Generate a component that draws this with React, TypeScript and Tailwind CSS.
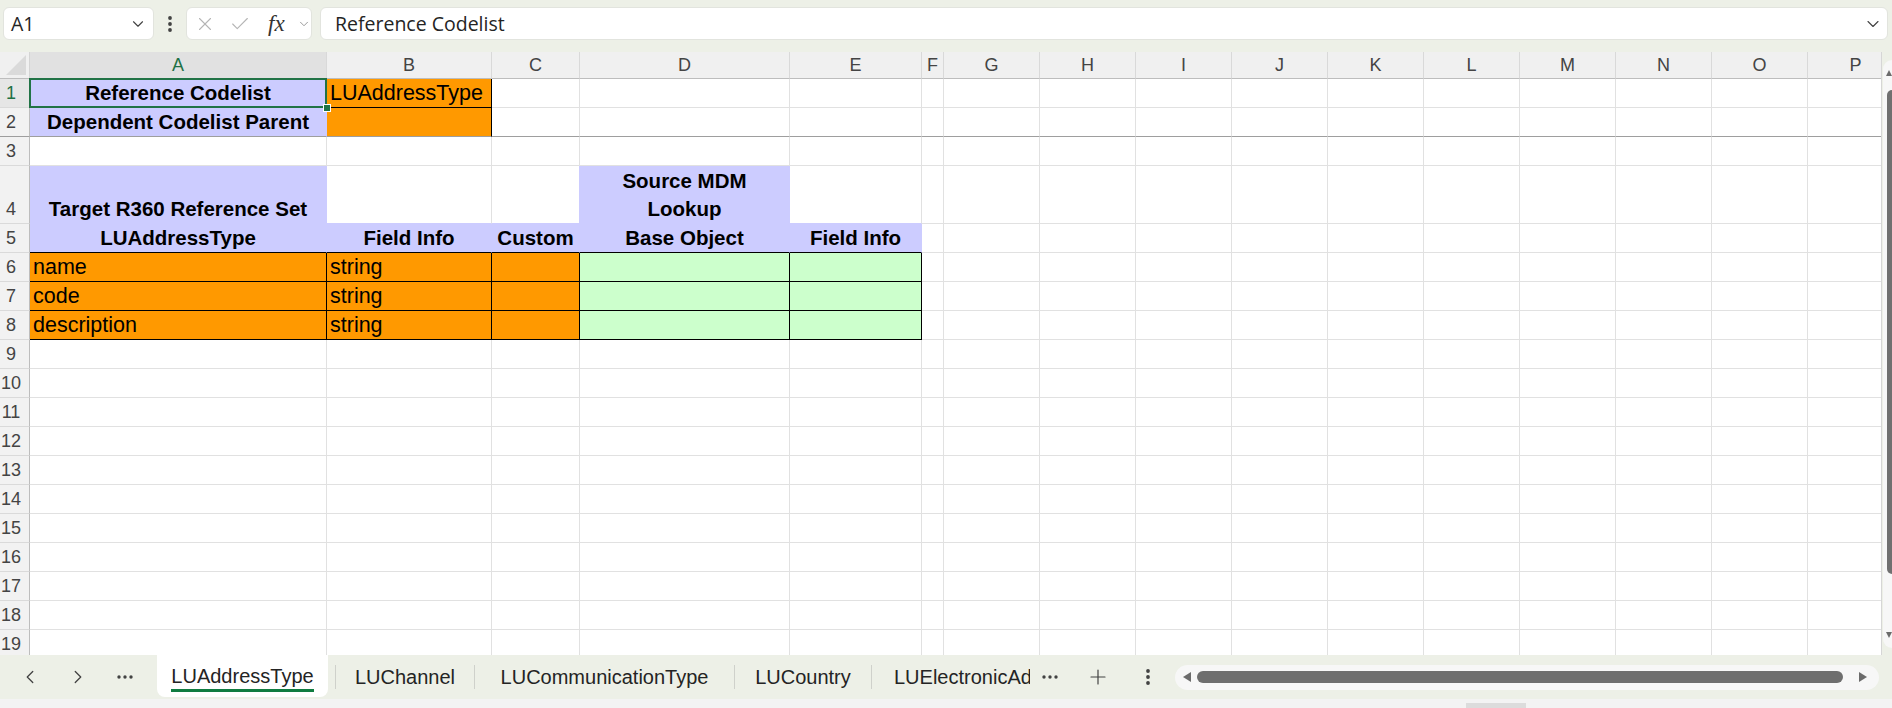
import clsx from "clsx";
import { Check, ChevronDown, ChevronLeft, ChevronRight, Plus, X } from "lucide-react";

type Fill = "none" | "lav" | "org" | "grn";
type Edge = "grid" | "black" | "lav" | "freeze";

type CellSpec = {
	fill?: Fill;
	right?: Edge;
	bottom?: Edge;
	text?: string;
	bold?: boolean;
	align?: "left" | "center";
	wrap?: boolean;
	bottomText?: boolean;
	selected?: boolean;
};

type RowSpec = { n: number; tall?: boolean; cells: CellSpec[] };

const LETTERS = ["A", "B", "C", "D", "E", "F", "G", "H", "I", "J", "K", "L", "M", "N", "O", "P"];

const GRID_COLS = "grid grid-cols-[30px_297px_165px_88px_210px_132px_22px_repeat(10,96px)]";

const FILL: Record<Fill, string> = {
	none: "bg-white",
	lav: "bg-[#ccccff]",
	org: "bg-[#ff9900]",
	grn: "bg-[#ccffcc]",
};

const RIGHT: Record<Edge, string> = {
	grid: "border-r-[#e1e1e1]",
	black: "border-r-black",
	lav: "border-r-[#ccccff]",
	freeze: "border-r-[#e1e1e1]",
};

const BOTTOM: Record<Edge, string> = {
	grid: "border-b-[#e1e1e1]",
	black: "border-b-black",
	lav: "border-b-[#ccccff]",
	freeze: "border-b-[#9e9e9e]",
};

// pad a row out to 16 columns with plain gridline cells
function fillRow(cells: CellSpec[], bottom: Edge = "grid"): CellSpec[] {
	const out = [...cells];
	while (out.length < LETTERS.length) out.push({ bottom });
	return out;
}

const lavHead = (text: string): CellSpec => ({
	fill: "lav",
	right: "lav",
	bottom: "black",
	text,
	bold: true,
	align: "center",
});

const dataRow = (name: string): CellSpec[] =>
	fillRow([
		{ fill: "org", right: "black", bottom: "black", text: name },
		{ fill: "org", right: "black", bottom: "black", text: "string" },
		{ fill: "org", right: "black", bottom: "black" },
		{ fill: "grn", right: "black", bottom: "black" },
		{ fill: "grn", right: "black", bottom: "black" },
	]);

const ROWS: RowSpec[] = [
	{
		n: 1,
		cells: fillRow([
			{ fill: "lav", right: "lav", bottom: "lav", text: "Reference Codelist", bold: true, align: "center", selected: true },
			{ fill: "org", right: "black", bottom: "black", text: "LUAddressType" },
		]),
	},
	{
		n: 2,
		cells: fillRow(
			[
				{ fill: "lav", right: "lav", bottom: "freeze", text: "Dependent Codelist Parent", bold: true, align: "center" },
				{ fill: "org", right: "black", bottom: "freeze" },
			],
			"freeze",
		),
	},
	{ n: 3, cells: fillRow([]) },
	{
		n: 4,
		tall: true,
		cells: fillRow([
			{ fill: "lav", right: "lav", bottom: "lav", text: "Target R360 Reference Set", bold: true, align: "center", bottomText: true },
			{ bottom: "lav" },
			{ right: "lav", bottom: "lav" },
			{ fill: "lav", right: "lav", bottom: "lav", text: "Source MDM Lookup", bold: true, align: "center", wrap: true },
			{ bottom: "lav" },
		]),
	},
	{
		n: 5,
		cells: fillRow([
			lavHead("LUAddressType"),
			lavHead("Field Info"),
			lavHead("Custom"),
			lavHead("Base Object"),
			lavHead("Field Info"),
		]),
	},
	{ n: 6, cells: dataRow("name") },
	{ n: 7, cells: dataRow("code") },
	{ n: 8, cells: dataRow("description") },
	...Array.from({ length: 11 }, (_, i) => ({ n: 9 + i, cells: fillRow([]) })),
];

function Dots({ vertical = false }: { vertical?: boolean }) {
	return vertical ? (
		<svg width="6" height="18" viewBox="0 0 6 18" className="fill-[#424242]">
			<circle cx="3" cy="3" r="1.9" />
			<circle cx="3" cy="9" r="1.9" />
			<circle cx="3" cy="15" r="1.9" />
		</svg>
	) : (
		<svg width="18" height="6" viewBox="0 0 18 6" className="fill-[#424242]">
			<circle cx="3" cy="3" r="1.7" />
			<circle cx="9" cy="3" r="1.7" />
			<circle cx="15" cy="3" r="1.7" />
		</svg>
	);
}

function FormulaBar() {
	return (
		<div className="flex h-[52px] shrink-0 items-start pl-[3px] pt-[7px]">
			<div className="flex h-[33px] w-[151px] items-center justify-between rounded-[6px] border border-[#e2e4de] bg-white pl-[7px] pr-[6px]">
				<span className="font-['Open_Sans',sans-serif] text-[19.5px] text-[#242424]">A1</span>
				<ChevronDown size={18} strokeWidth={1.5} className="text-[#424242]" />
			</div>
			<div className="flex h-[33px] w-[32px] items-center justify-center">
				<Dots vertical />
			</div>
			<div className="flex h-[33px] w-[126px] items-center rounded-[6px] border border-[#e2e4de] bg-white pl-[7px]">
				<X size={22} strokeWidth={1.2} className="text-[#b5b5b5]" />
				<Check size={22} strokeWidth={1.2} className="ml-[13px] text-[#b5b5b5]" />
				<span className="ml-[17px] font-['Liberation_Serif',serif] text-[23px] italic leading-none text-[#333]">fx</span>
				<ChevronDown size={14} strokeWidth={1.5} className="ml-[12px] text-[#8c8c8c]" />
			</div>
			<div className="ml-[8px] mr-[4px] flex h-[33px] flex-1 items-center justify-between rounded-[6px] border border-[#e2e4de] bg-white pl-[14px] pr-[4px]">
				<span className="font-['Open_Sans',sans-serif] text-[19.5px] text-[#242424]">Reference Codelist</span>
				<ChevronDown size={20} strokeWidth={1.3} className="text-[#424242]" />
			</div>
		</div>
	);
}

function ColumnHeaders() {
	return (
		<div className={clsx(GRID_COLS, "h-[27px]")}>
			<div className="relative border-r border-b border-r-[#d4d4d4] border-b-[#bdbdbd] bg-[#f0f0f0]">
				<svg width="20" height="20" viewBox="0 0 20 20" className="absolute right-[3px] bottom-[3px] fill-[#dadada]">
					<polygon points="20,0 20,20 0,20" />
				</svg>
			</div>
			{LETTERS.map((l) => (
				<div
					key={l}
					className={clsx(
						"border-r border-b border-r-[#d9d9d9] border-b-[#bdbdbd] text-center text-[18px] leading-[26px]",
						l === "A" ? "bg-[#e1e1e1] text-[#1e7145]" : "bg-[#f0f0f0] text-[#444]",
					)}
				>
					{l}
				</div>
			))}
		</div>
	);
}

function Cell({ c }: { c: CellSpec }) {
	return (
		<div
			className={clsx(
				"relative border-r border-b px-[3px] text-black",
				FILL[c.fill ?? "none"],
				RIGHT[c.right ?? "grid"],
				BOTTOM[c.bottom ?? "grid"],
				c.bold ? "text-[20.5px] font-bold" : "text-[21.5px]",
				c.align === "center" ? "text-center" : "text-left",
				c.wrap ? "flex items-center justify-center leading-[28px] whitespace-normal" : "whitespace-nowrap",
				c.bottomText ? "flex flex-col justify-end leading-[28px]" : !c.wrap && "leading-[28px]",
				c.selected && "z-10",
			)}
		>
			{c.wrap ? <span className="block w-[150px]">{c.text}</span> : c.text}
			{c.selected && (
				<>
					<div className="pointer-events-none absolute -top-px -left-px -right-px -bottom-px border-2 border-[#217346]" />
					<div className="absolute -right-[5px] -bottom-[5px] h-[8px] w-[8px] border border-white bg-[#217346]" />
				</>
			)}
		</div>
	);
}

function Sheet() {
	return (
		<div className="w-[1882px] shrink-0 overflow-hidden border-r border-[#d6d6d6] bg-white font-['Liberation_Sans',Arial,sans-serif]">
			<ColumnHeaders />
			{ROWS.map((row) => (
				<div key={row.n} className={clsx(GRID_COLS, row.tall ? "h-[58px]" : "h-[29px]")}>
					<div
						className={clsx(
							"flex items-end justify-center border-r border-b border-r-[#bdbdbd] pr-[7px] text-[18px] leading-[28px]",
							row.n === 2 ? "border-b-[#9e9e9e]" : "border-b-[#dadada]",
							row.n === 1 ? "bg-[#e6e6e6] text-[#1e7145]" : "bg-[#f2f2f2] text-[#444]",
						)}
					>
						{row.n}
					</div>
					{row.cells.map((c, i) => (
						<Cell key={`${row.n}-${LETTERS[i]}`} c={c} />
					))}
				</div>
			))}
		</div>
	);
}

function VScroll() {
	return (
		<div className="flex w-[10px] flex-col items-end pt-[8px]">
			<div className="flex h-[588px] w-[9px] flex-col items-end rounded-l-full bg-[#f7f7f7]">
				<svg width="6" height="6" viewBox="0 0 6 6" className="mt-[10px] fill-[#6b6b6b]">
					<polygon points="3,0 6,6 0,6" />
				</svg>
				<div className="mt-[14px] h-[484px] w-[5px] rounded-l-full bg-[#707070]" />
				<div className="flex-1" />
				<svg width="6" height="6" viewBox="0 0 6 6" className="mb-[10px] fill-[#6b6b6b]">
					<polygon points="0,0 6,0 3,6" />
				</svg>
			</div>
		</div>
	);
}

const TABS = [
	{ name: "LUChannel", w: "w-[138px]" },
	{ name: "LUCommunicationType", w: "w-[259px]" },
	{ name: "LUCountry", w: "w-[136px]" },
];

function SheetTabs() {
	return (
		<div className="flex h-[44px] shrink-0 items-center pl-[6px] font-['Liberation_Sans',Arial,sans-serif] text-[20px] text-[#242424]">
			<button className="flex h-[32px] w-[48px] items-center justify-center">
				<ChevronLeft size={22} strokeWidth={1.4} className="text-[#424242]" />
			</button>
			<button className="flex h-[32px] w-[48px] items-center justify-center">
				<ChevronRight size={22} strokeWidth={1.4} className="text-[#424242]" />
			</button>
			<button className="flex h-[32px] w-[46px] items-center justify-center">
				<Dots />
			</button>
			<div className="ml-[9px] flex h-[42px] w-[171px] items-center justify-center self-start rounded-b-[8px] bg-white pt-[4px]">
				<span className="border-b-[3px] border-[#107c41] pb-[1px] leading-[24px]">LUAddressType</span>
			</div>
			<div className="ml-[7px] h-[24px] w-px bg-[#cfd1cb]" />
			{TABS.map((t) => (
				<div key={t.name} className="flex items-center">
					<div className={clsx("text-center leading-[24px]", t.w)}>{t.name}</div>
					<div className="h-[24px] w-px bg-[#cfd1cb]" />
				</div>
			))}
			<div className="w-[158px] overflow-hidden whitespace-nowrap pl-[22px] leading-[24px]">LUElectronicAddressType</div>
			<div className="ml-[11px]">
				<Dots />
			</div>
			<Plus size={24} strokeWidth={1.2} className="ml-[27px] text-[#424242]" />
			<div className="ml-[35px]">
				<Dots vertical />
			</div>
			<div className="ml-[24px] flex h-[25px] w-[704px] items-center rounded-full bg-[#f7f7f7] pl-[8px] pr-[12px]">
				<svg width="8" height="10" viewBox="0 0 8 10" className="fill-[#6b6b6b]">
					<polygon points="8,0 8,10 0,5" />
				</svg>
				<div className="ml-[6px] h-[12px] flex-1 rounded-full bg-[#6e6e6e]" />
				<svg width="8" height="10" viewBox="0 0 8 10" className="ml-[16px] fill-[#6b6b6b]">
					<polygon points="0,0 8,5 0,10" />
				</svg>
			</div>
		</div>
	);
}

export default function App() {
	return (
		<div className="flex h-[708px] w-[1892px] flex-col overflow-hidden bg-[#edf0e7]">
			<FormulaBar />
			<div className="flex h-[603px] shrink-0">
				<Sheet />
				<VScroll />
			</div>
			<SheetTabs />
			<div className="flex h-[9px] shrink-0 items-end bg-[#f3f3f3]">
				<div className="ml-[1466px] h-[5px] w-[60px] bg-[#dcdcdc]" />
			</div>
		</div>
	);
}
